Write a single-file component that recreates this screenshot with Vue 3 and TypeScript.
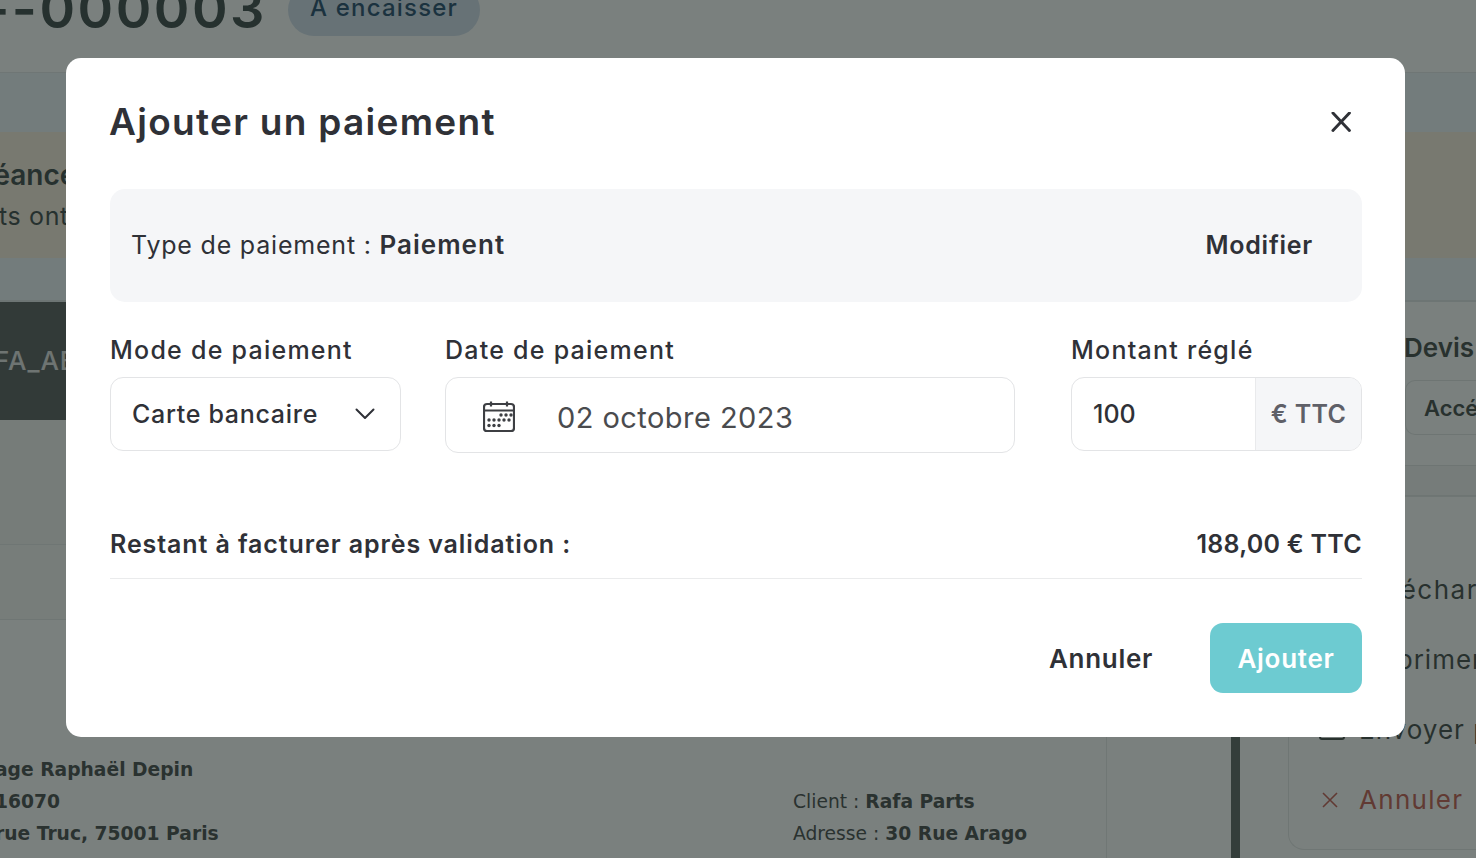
<script setup lang="ts">
const details = ["age Raphaël Depin", "16070", "rue Truc, 75001 Paris"];
</script>

<template>
  <div class="page">
    <div class="top">
      <header class="head">
        <h1>F--000003</h1>
        <span class="badge">À encaisser</span>
      </header>
      <div class="tabs"></div>
      <div class="alert">
        <strong>Échéance</strong>
        <span>Paiements ont</span>
      </div>
      <div class="gap"></div>
    </div>
    <div class="body">
      <main class="main">
        <div class="darkbar"><span>FA_AB</span></div>
        <div class="blank"></div>
        <div class="blank2"></div>
        <div class="doc">
          <div class="doc-left">
            <b v-for="d in details" :key="d">{{ d }}</b>
          </div>
          <div class="doc-right">
            <p>Client : <b>Rafa Parts</b></p>
            <p>Adresse : <b>30 Rue Arago</b></p>
          </div>
          <div class="doc-end"></div>
        </div>
      </main>
      <div class="strip"></div>
      <aside class="side">
        <div class="side-title">Devis</div>
        <div class="side-btn">Accéder</div>
        <div class="side-band"></div>
        <div class="side-card">
          <div class="side-row one">Télécharger</div>
          <div class="side-row two">Imprimer</div>
          <div class="side-row three">
            <svg width="26" height="20" viewBox="0 0 26 20" fill="none" stroke="#333a39" stroke-width="2"><rect x="1" y="1" width="24" height="18" rx="2" /></svg>
            <span>Envoyer par</span>
          </div>
          <div class="side-row cancel">
            <svg width="16" height="16" viewBox="0 0 16 16" fill="none" stroke="#c15145" stroke-width="1.6"><path d="M1 1l14 14M15 1L1 15" /></svg>
            <span>Annuler</span>
          </div>
        </div>
      </aside>
    </div>

    <div class="overlay">
      <section class="modal">
        <div class="modal-head">
          <h2>Ajouter un paiement</h2>
          <svg class="close" width="20" height="20" viewBox="0 0 20 20" fill="none" stroke="#2f3137" stroke-width="3" stroke-linecap="round"><path d="M2 1.500l17 18M19 1.500l-17 18" transform="translate(0 -.5) scale(.97)" /></svg>
        </div>
        <div class="type">
          <span class="type-label">Type de paiement : <b>Paiement</b></span>
          <b class="mod">Modifier</b>
        </div>
        <div class="fields">
          <div class="field f-mode">
            <label>Mode de paiement</label>
            <div class="box select">
              <span>Carte bancaire</span>
              <svg width="20" height="12" viewBox="0 0 20 12" fill="none" stroke="#2f3137" stroke-width="2" stroke-linecap="round" stroke-linejoin="round"><path d="M1.500 1.500L10 10l8.500-8.500" /></svg>
            </div>
          </div>
          <div class="field f-date">
            <label>Date de paiement</label>
            <div class="box date">
              <svg width="32" height="32" viewBox="0 0 32 32" fill="none" stroke="#3d3f43" stroke-width="2.200">
                <rect x="1" y="3" width="30" height="27" rx="3" />
                <path d="M1 9.500h30M8 .5v5M24 .5v5" />
                <g fill="#3d3f43" stroke="none">
                  <circle cx="18" cy="14" r="1.700" /><circle cx="23" cy="14" r="1.700" /><circle cx="28" cy="14" r="1.700" />
                  <circle cx="6" cy="19" r="1.700" /><circle cx="11" cy="19" r="1.700" /><circle cx="16" cy="19" r="1.700" /><circle cx="21" cy="19" r="1.700" /><circle cx="26" cy="19" r="1.700" />
                  <circle cx="6" cy="24.500" r="1.700" /><circle cx="11" cy="24.500" r="1.700" /><circle cx="16" cy="24.500" r="1.700" />
                </g>
              </svg>
              <span>02 octobre 2023</span>
            </div>
          </div>
          <div class="field f-amount">
            <label>Montant réglé</label>
            <div class="box amount">
              <span class="val">100</span>
              <span class="unit">€ TTC</span>
            </div>
          </div>
        </div>
        <div class="rest">
          <b class="rest-label">Restant à facturer après validation :</b>
          <b class="rest-value">188,00 € TTC</b>
        </div>
        <div class="actions">
          <button type="button" class="cancel-btn">Annuler</button>
          <button type="button" class="add">Ajouter</button>
        </div>
      </section>
    </div>
  </div>
</template>

<style>
html, body { margin: 0; overflow: hidden; }
</style>

<style scoped>
* { box-sizing: border-box; }
.page {
  width: 1476px;
  height: 858px;
  overflow: hidden;
  display: flex;
  flex-direction: column;
  background: #fff;
  font-family: "DejaVu Sans", sans-serif;
  color: #2f3137;
}
.top { flex: none; overflow: hidden; }
.head { height: 73px; border-bottom: 1px solid #e3e6e8; display: flex; align-items: flex-start; margin-left: -50px; }
.head h1 { margin: -27px 0 0; font: 600 54px/72px Inter, sans-serif; letter-spacing: 2.500px; color: #2f3a3a; white-space: nowrap; }
.badge { margin: -16px 0 0 21px; width: 192px; height: 52px; border-radius: 26px; background: #cfdceb; color: #123c63; font: 500 24px/48px Inter, sans-serif; letter-spacing: 1.200px; text-align: center; }
.tabs { height: 59px; background: #edf5fb; }
.alert { height: 126px; background: #f9eddd; padding: 24px 0 0; display: flex; flex-direction: column; white-space: nowrap; font-family: Inter, sans-serif; color: #2f3a3a; }
.alert strong { margin-left: -57px; font-size: 28px; line-height: 38px; font-weight: 600; }
.alert span { margin-left: -107px; font-size: 25px; line-height: 44px; letter-spacing: .6px; }
.gap { height: 44px; background: #edf5fb; border-bottom: 2px solid #dfe4e6; }

.body { flex: 1; min-height: 0; display: flex; }
.main { width: 1231px; flex: none; overflow: hidden; }
.darkbar { height: 118px; background: #4b5052; color: #e0e0e0; font: 500 26px/118px Inter, sans-serif; letter-spacing: 1px; white-space: nowrap; overflow: hidden; text-indent: -6px; }
.blank { height: 125px; background: #f5f5f3; border-bottom: 1px solid #e4e6e6; }
.blank2 { height: 75px; background: #f7f7f6; border-bottom: 1px solid #e4e6e6; }
.doc { display: flex; height: 240px; padding-top: 134px; font-size: 18.700px; line-height: 32px; color: #373c3c; }
.doc-left { width: 793px; flex: none; display: flex; flex-direction: column; margin-left: -5px; white-space: nowrap; }
.doc-right { width: 313px; flex: none; margin-left: 5px; white-space: nowrap; padding-top: 32px; }
.doc-right p { margin: 0; }
.doc-end { flex: 1; margin-top: -134px; border-left: 1px solid #e6e8e8; }
.strip { width: 9px; flex: none; background: #525a58; }
.side { flex: 1; min-width: 0; overflow: hidden; padding-left: 165px; font-family: Inter, sans-serif; white-space: nowrap; color: #333a39; }
.side-title { margin: 32px 0 0 -1px; font-size: 26px; font-weight: 600; line-height: 28px; }
.side-btn { margin-top: 18px; height: 55px; padding-left: 18px; border: 1px solid #e2e4e4; border-right: 0; border-radius: 10px 0 0 10px; font-size: 22px; font-weight: 600; line-height: 54px; }
.side-band { margin: 30px 0 0 -165px; height: 31px; border-top: 1px solid #e2e4e4; border-bottom: 1px solid #e2e4e4; background: #f5f6f6; }
.side-card { margin: 0 0 0 -117px; width: 260px; height: 354px; border: 1px solid #e4e6e6; border-right: 0; border-bottom-left-radius: 16px; position: relative; }
.side-row { position: absolute; left: 30px; display: flex; align-items: center; gap: 14px; font-size: 26px; line-height: 30px; letter-spacing: 1px; }
.side-row.one { top: 78px; left: 71px; letter-spacing: 1.500px; }
.side-row.two { top: 148px; left: 76px; }
.side-row.three { top: 218px; }
.side-row.cancel { top: 288px; left: 33px; color: #c15145; gap: 21px; letter-spacing: 1.300px; }

.overlay {
  position: fixed;
  inset: 0;
  background: rgba(33, 43, 40, .6);
}
.modal {
  position: absolute;
  left: 66px;
  top: 58px;
  width: 1339px;
  height: 679px;
  background: #fff;
  border-radius: 15px;
  padding: 0 43px 0 44px;
  font-family: Inter, sans-serif;
  color: #2f3137;
}
.modal-head { height: 131px; display: flex; justify-content: space-between; align-items: center; padding-bottom: 4px; }
.modal-head h2 { margin: 0 0 0 -1px; font-size: 37px; font-weight: 600; letter-spacing: 1.300px; line-height: 44px; white-space: nowrap; }
.close { margin-right: 11px; }
.type { height: 113px; background: #f5f6f8; border-radius: 15px; display: flex; align-items: center; justify-content: space-between; padding: 0 49px 2px 21px; font-size: 25px; }
.type-label { letter-spacing: .8px; }
.type-label b { font-size: 26px; font-weight: 600; letter-spacing: 1px; }
.mod { font-weight: 600; letter-spacing: .75px; }
.fields { display: flex; margin-top: 31px; }
.field label { display: block; font-size: 25px; line-height: 34px; font-weight: 500; letter-spacing: 1.250px; white-space: nowrap; }
.f-mode { width: 291px; }
.f-date { width: 570px; margin-left: 44px; }
.f-amount { width: 291px; margin-left: 56px; }
.box { margin-top: 10px; border: 1.500px solid #e3e4e6; border-radius: 13px; height: 74px; display: flex; align-items: center; font-size: 25px; }
.select { justify-content: space-between; padding: 0 25px 0 21px; font-weight: 500; letter-spacing: .7px; }
.date { height: 76px; padding: 4px 0 0 37px; gap: 42px; color: #4a4b4e; font-size: 29px; letter-spacing: .45px; }
.amount { overflow: hidden; font-weight: 500; }
.val { flex: 1; padding-left: 21px; }
.unit { width: 106px; height: 100%; background: #f5f6f8; border-left: 1.500px solid #e9eaec; color: #5f6068; font-weight: 600; letter-spacing: .3px; text-align: center; line-height: 72px; }
.rest { margin-top: 71px; height: 55px; border-bottom: 1.500px solid #eaebec; display: flex; justify-content: space-between; font-size: 25px; line-height: 40px; }
.rest b { font-weight: 600; }
.rest-label { letter-spacing: .9px; }
.rest-value { letter-spacing: .25px; }
.actions { margin-top: 44px; display: flex; justify-content: flex-end; align-items: center; }
button { border: 0; font-family: Inter, sans-serif; font-size: 26px; font-weight: 600; letter-spacing: .7px; cursor: pointer; }
.cancel-btn { background: none; color: #2f3137; margin-right: 57px; padding: 0; }
.add { width: 152px; height: 70px; border-radius: 13px; background: #6dcbd1; color: #fff; }
</style>
